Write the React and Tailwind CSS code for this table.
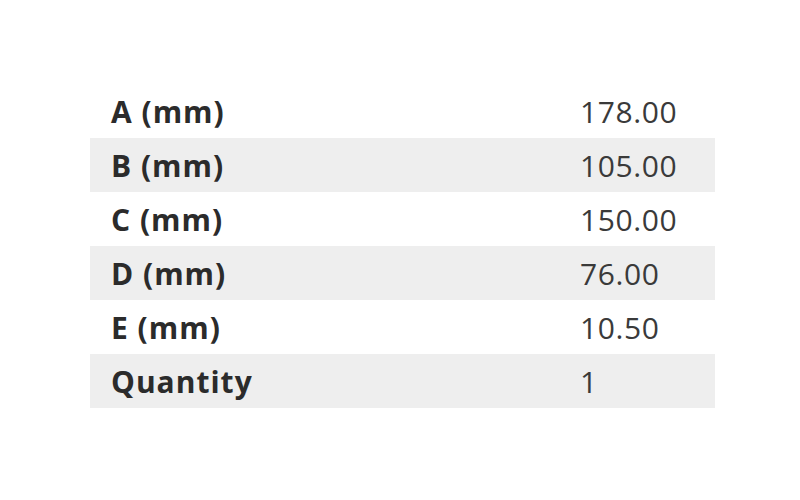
const rows = [
  ["A (mm)", "178.00"],
  ["B (mm)", "105.00"],
  ["C (mm)", "150.00"],
  ["D (mm)", "76.00"],
  ["E (mm)", "10.50"],
  ["Quantity", "1"],
];

export default function App() {
  return (
    <div className="w-[800px] h-[500px] bg-white pt-[84px] pl-[90px]" style={{ fontFamily: '"Open Sans", sans-serif' }}>
      <div className="w-[625px] flex flex-col">
        {rows.map(([label, value], i) => (
          <div key={label} className={`flex h-[54px] items-center ${i % 2 === 1 ? "bg-[#eeeeee]" : ""}`}>
            <div className="w-[490px] pl-[21px] text-[30px] font-bold tracking-[1px] text-[#2b2b2b]">{label}</div>
            <div className="text-[30px] tracking-[0.6px] text-[#3a3a3a]">{value}</div>
          </div>
        ))}
      </div>
    </div>
  );
}
